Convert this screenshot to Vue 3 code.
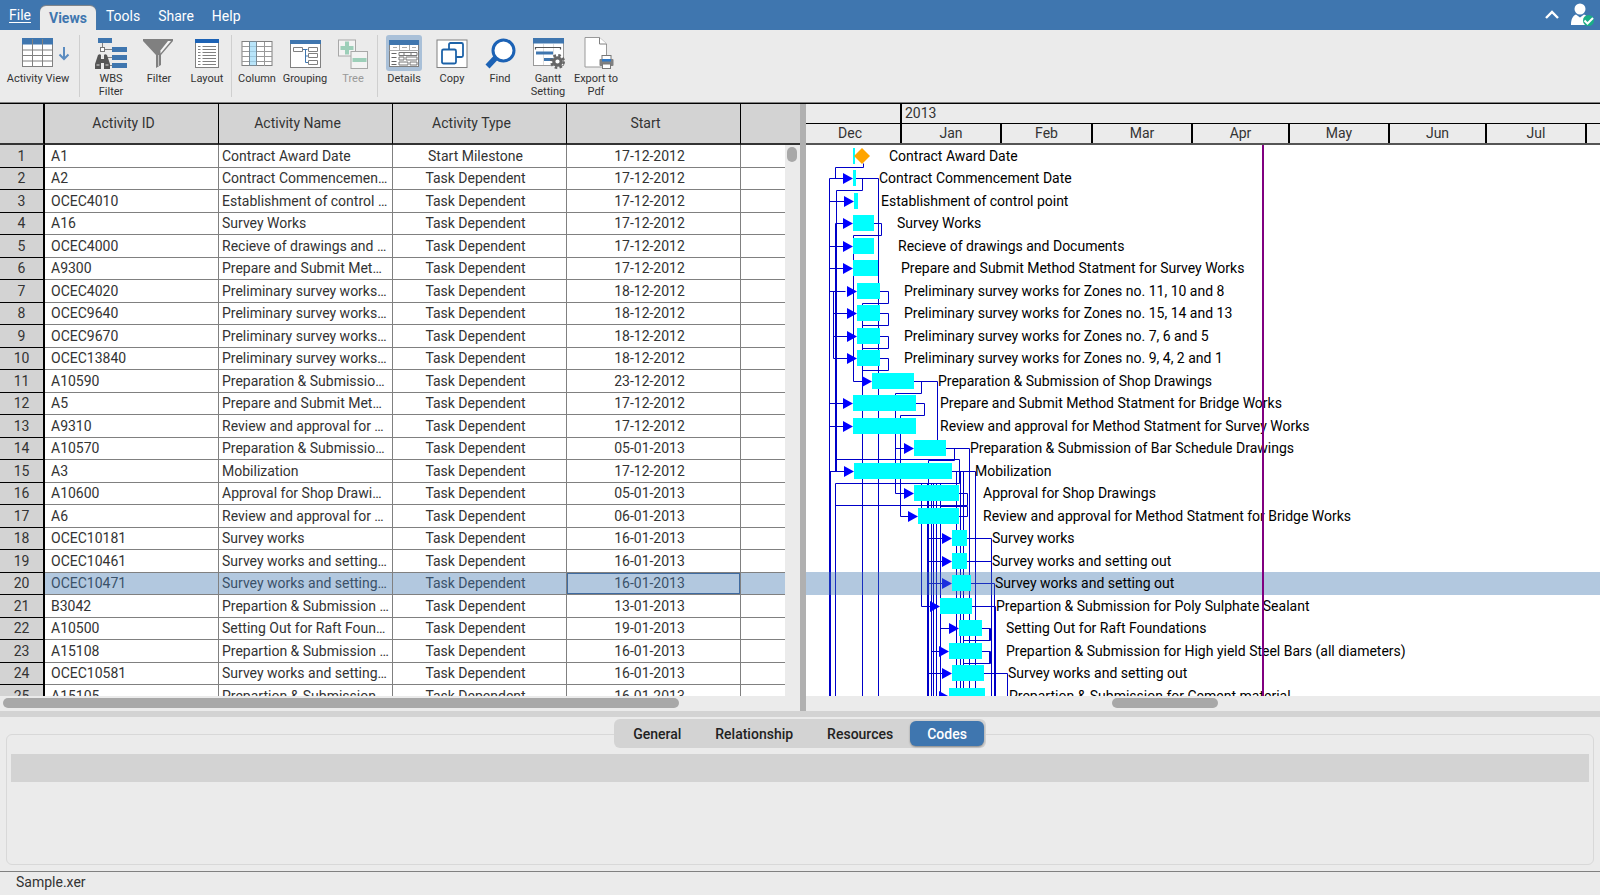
<script setup>
import { ref } from 'vue'

const menus = ['File', 'Views', 'Tools', 'Share', 'Help']
const activeMenu = ref('Views')

const toolGroups = [
  [{ icon: 'activity', label: 'Activity View' }],
  [
    { icon: 'wbs', label: 'WBS Filter' },
    { icon: 'filter', label: 'Filter' },
    { icon: 'layout', label: 'Layout' },
  ],
  [
    { icon: 'column', label: 'Column' },
    { icon: 'grouping', label: 'Grouping' },
    { icon: 'tree', label: 'Tree', disabled: true },
  ],
  [
    { icon: 'details', label: 'Details', pressed: true },
    { icon: 'copy', label: 'Copy' },
    { icon: 'find', label: 'Find' },
    { icon: 'gantt', label: 'Gantt Setting' },
    { icon: 'export', label: 'Export to Pdf' },
  ],
]

const columns = ['Activity ID', 'Activity Name', 'Activity Type', 'Start']

// id, name, type, start date, bar start, bar end, label start
const T = 'Task Dependent'
const activities = [
  ['A1', 'Contract Award Date', 'Start Milestone', '17-12-2012', 47, 49, 83],
  ['A2', 'Contract Commencement Date', T, '17-12-2012', 47, 50, 73],
  ['OCEC4010', 'Establishment of control point', T, '17-12-2012', 48, 52, 75],
  ['A16', 'Survey Works', T, '17-12-2012', 47, 68, 91],
  ['OCEC4000', 'Recieve of drawings and Documents', T, '17-12-2012', 47, 68, 92],
  ['A9300', 'Prepare and Submit Method Statment for Survey Works', T, '17-12-2012', 47, 72, 95],
  ['OCEC4020', 'Preliminary survey works for Zones no. 11, 10 and 8', T, '18-12-2012', 51, 74, 98],
  ['OCEC9640', 'Preliminary survey works for Zones no. 15, 14 and 13', T, '18-12-2012', 51, 74, 98],
  ['OCEC9670', 'Preliminary survey works for Zones no. 7, 6 and 5', T, '18-12-2012', 51, 74, 98],
  ['OCEC13840', 'Preliminary survey works for Zones no. 9, 4, 2 and 1', T, '18-12-2012', 51, 74, 98],
  ['A10590', 'Preparation & Submission of Shop Drawings', T, '23-12-2012', 66, 108, 132],
  ['A5', 'Prepare and Submit Method Statment for Bridge Works', T, '17-12-2012', 47, 110, 134],
  ['A9310', 'Review and approval for Method Statment for Survey Works', T, '17-12-2012', 47, 110, 134],
  ['A10570', 'Preparation & Submission of Bar Schedule Drawings', T, '05-01-2013', 108, 140, 164],
  ['A3', 'Mobilization', T, '17-12-2012', 48, 146, 169],
  ['A10600', 'Approval for Shop Drawings', T, '05-01-2013', 108, 153, 177],
  ['A6', 'Review and approval for Method Statment for Bridge Works', T, '06-01-2013', 112, 153, 177],
  ['OCEC10181', 'Survey works', T, '16-01-2013', 146, 161, 186],
  ['OCEC10461', 'Survey works and setting out', T, '16-01-2013', 146, 161, 186],
  ['OCEC10471', 'Survey works and setting out', T, '16-01-2013', 146, 165, 189],
  ['B3042', 'Prepartion & Submission for Poly Sulphate Sealant', T, '13-01-2013', 134, 166, 190],
  ['A10500', 'Setting Out for Raft Foundations', T, '19-01-2013', 153, 176, 200],
  ['A15108', 'Prepartion & Submission for High yield Steel Bars (all diameters)', T, '16-01-2013', 143, 176, 200],
  ['OCEC10581', 'Survey works and setting out', T, '16-01-2013', 146, 178, 202],
  ['A15105', 'Prepartion & Submission for Cement material', T, '16-01-2013', 143, 179, 203],
].map(([id, name, type, start, x1, x2, tx]) => ({ id, name, type, start, x1, x2, tx }))

const selected = ref(19)

const months = [
  ['Dec', 96], ['Jan', 100], ['Feb', 91], ['Mar', 100], ['Apr', 97],
  ['May', 100], ['Jun', 97], ['Jul', 100], ['', 100],
].map(([name, width]) => ({ name, width }))

// centre line of a one-based row; rows alternate 23 and 22 pixels
const mid = (n) => Math.floor((45 * n - 23) / 2)
const floor = 700

const links = [
  `M58 18V22H30V${mid(2)}`,
  `M24 ${floor}V${mid(2)}H40`,
  `M50 ${mid(2)}H73V${floor}`,
  `M57 ${mid(2)}V45H31V314H154V338H30V${floor}`,
  `M30 ${mid(15)}V${mid(4)}H40`, `M31 ${mid(4)}V${mid(15)}`,
  ...[3, 5, 6, 7, 12, 13, 15].map((n) => `M24 ${mid(n)}H40`),
  `M28 ${mid(7)}V${mid(10)}H42`, `M28 ${mid(8)}H42`, `M28 ${mid(9)}H42`,
  `M68 ${mid(4)}H76V90H48V${mid(11)}H60`,
  ...[7, 8, 9, 10].map((n) => `M74 ${mid(n)}H83V${mid(n) + 12}H57`),
  `M57 158V${floor}`,
  `M108 ${mid(11)}H132V${mid(14)}`, `M131 338V${floor}`,
  `M116 ${mid(11)}V248H90V${mid(16)}H100`, `M90 ${mid(14)}H100`,
  `M110 ${mid(12)}H119V270H95V${mid(17)}H104`,
  `M140 ${mid(14)}H164V${floor}`, `M149 ${mid(14)}V315H123V${floor}`,
  `M146 ${mid(15)}H170V${floor}`, `M25 ${mid(15)}V${floor}`,
  ...[151, 155, 158].map((x) => `M${x} ${mid(15)}V${floor}`),
  ...[122, 126, 128, 135].map((x) => `M${x} 338V${floor}`),
  `M116 338V${mid(21)}H126`,
  `M153 ${mid(16)}H162V360H30`, `M153 ${mid(17)}H162V361H135`,
  `M161 ${mid(18)}H186V${floor}`, `M161 ${mid(19)}H186`, `M165 ${mid(20)}H189V${floor}`,
  `M166 ${mid(21)}H190V${floor}`,
  ...[18, 19, 20, 24].map((n) => `M122 ${mid(n)}H137`),
  `M135 ${mid(22)}H144`, `M126 ${mid(23)}H136`, `M126 ${mid(25)}H136`,
  ...[22, 23].map((n) => `M176 ${mid(n)}H185V${mid(n) + 12}H158M184 ${mid(n)}V${mid(n) + 12}`),
  `M178 ${mid(24)}H202V${floor}`,
]

const detailTabs = ['General', 'Relationship', 'Resources', 'Codes']
const activeTab = ref('Codes')
</script>

<template>
  <div class="app">
    <header class="menubar">
      <nav class="menus">
        <button
          v-for="m in menus"
          :key="m"
          type="button"
          class="menu"
          :class="{ active: m === activeMenu, file: m === 'File' }"
          @click="activeMenu = m"
        >{{ m }}</button>
      </nav>
      <div class="account">
        <button type="button" class="bare" aria-label="Collapse ribbon">
          <svg width="14" height="10" viewBox="0 0 14 10"><path d="M1 8 7 2l6 6" fill="none" stroke="#fff" stroke-width="2.4" /></svg>
        </button>
        <button type="button" class="bare" aria-label="Account">
          <svg width="24" height="24" viewBox="0 0 24 24">
            <circle cx="9" cy="6" r="5.5" fill="#fff" />
            <path d="M0 22c0-6 2-9.500 5-10.500l4 3 4-3c3 1 5 4.500 5 10.500z" fill="#fff" />
            <circle cx="17.500" cy="17.500" r="5.500" fill="#1aae87" />
            <path d="m13.500 17.500 3 3 5.500-5.500" fill="none" stroke="#fff" stroke-width="2" />
          </svg>
        </button>
      </div>
    </header>

    <div class="toolbar">
      <div v-for="(group, gi) in toolGroups" :key="gi" class="group" :class="'group-' + gi">
        <button
          v-for="t in group"
          :key="t.icon"
          type="button"
          class="tool"
          :class="{ pressed: t.pressed }"
          :disabled="t.disabled"
        >
          <svg v-if="t.icon === 'activity'" class="icon wide" viewBox="0 0 66 36">
            <rect x="17.500" y="3.500" width="30" height="28" fill="#fff" stroke="#808080" />
            <rect x="17" y="3" width="31" height="6.500" fill="#3f76af" />
            <path d="M17.500 15h30M17.500 20.500h30M17.500 26h30M27.500 4v28M37.500 4v28" stroke="#808080" />
            <path d="M59 12v12M54.500 19.500 59 24l4.500-4.500" fill="none" stroke="#5b8cc0" stroke-width="2" />
          </svg>
          <svg v-else class="icon" viewBox="0 0 36 36">
            <g v-if="t.icon === 'wbs'">
              <path d="M9.500 8v5M12 14.500h7M13 22.500h6M15 30.500h4" stroke="#808080" fill="none" />
              <path d="M5 3h14v5H5zM19 12h15v5H19zM19 20h15v5H19zM19 28h15v5H19z" fill="#3f76af" />
              <rect x="7.500" y="12.500" width="4" height="4" fill="#fff" stroke="#777" />
              <path d="M5 20q2-1.500 3 0v4h3v-4q1-1.500 3 0l3 9v5h-6v-6H8v6H2v-5z" fill="#555" />
              <path d="M3.500 30h3M12.500 30h3M9.500 21v2" stroke="#ddd" />
            </g>
            <g v-else-if="t.icon === 'filter'">
              <path d="M2 4h30v2L20 20v10l-5 3V20L2 6z" fill="#808080" />
              <path d="M27 6h3L19.500 18.500v-3z" fill="#f4f4f4" />
              <path d="M17.500 20v11" stroke="#c4c4c4" />
            </g>
            <g v-else-if="t.icon === 'layout'">
              <rect x="6.500" y="4.500" width="23" height="28" fill="#fff" stroke="#808080" />
              <rect x="6" y="4" width="24" height="4" fill="#1c62b5" />
              <path d="M9 11.500h2.500M9 14.500h2.500M9 17.500h2.500M9 20.500h2.500M9 23.500h2.500M9 26.500h2.500M9 29.500h2.500M13.500 11.500H27M13.500 14.500H27M13.500 17.500H27M13.500 20.500H27M13.500 23.500H27M13.500 26.500H27M13.500 29.500H27" stroke="#808080" />
            </g>
            <g v-else-if="t.icon === 'column'">
              <rect x="3" y="6.500" width="30" height="24" fill="#fff" stroke="#808080" />
              <path d="M3 11.500h30M3 16.500h30M3 21.500h30M3 26.500h30M25.500 7v24" stroke="#999" />
              <rect x="10.500" y="6.500" width="7" height="24" fill="#b9e5fa" stroke="#7a8a94" />
              <path d="M11 11.500h6M11 16.500h6M11 21.500h6M11 26.500h6" stroke="#9cc8de" />
            </g>
            <g v-else-if="t.icon === 'grouping'">
              <rect x="3.500" y="5.500" width="30" height="27" fill="#fff" stroke="#808080" />
              <rect x="3" y="5" width="31" height="4" fill="#3f76af" />
              <path d="M15.500 14.500h5M18.500 14.500v13M18.500 21h2.500M18.500 27.500h2.500" stroke="#3f76af" fill="none" />
              <path d="M6.500 12.500h9v4h-9zM21.500 12.500h9v4h-9zM21.500 18.500h9v4h-9zM21.500 25.500h9v4h-9z" fill="#fff" stroke="#808080" />
            </g>
            <g v-else-if="t.icon === 'tree'">
              <rect x="3.500" y="5" width="17" height="16" fill="#f3f3f3" stroke="#a8a8a8" />
              <path d="M12 6.500v13M5.500 13h13" stroke="#9dcfb9" stroke-width="4" />
              <rect x="16" y="16.500" width="16.500" height="17" fill="#f3f3f3" stroke="#a8a8a8" />
              <path d="M17.500 25h14" stroke="#9dcfb9" stroke-width="4" />
            </g>
            <g v-else-if="t.icon === 'details'">
              <rect x="3.500" y="5.500" width="29" height="26" fill="#fff" stroke="#808080" />
              <rect x="3" y="5" width="30" height="5" fill="#3f76af" />
              <path d="M3.500 15.500h29M13.500 10v5M23.500 10v5M7 12.500h4M16 12.500h5M26 12.500h4" stroke="#aaa" />
              <path d="M5.500 18.500h5M5.500 22.500h5M5.500 26.500h5M5.500 29.500h5" stroke="#666" />
              <path d="M13 17.500h18v3H13zM13 22h5v3h-5zM20 22h11v3H20zM13 27h9v3h-9zM24 27h7v3h-7zM18 17.500v3M25 17.500v3" fill="none" stroke="#777" />
            </g>
            <g v-else-if="t.icon === 'copy'">
              <rect x="3" y="5" width="30" height="27.500" fill="#fff" stroke="#808080" />
              <rect x="15" y="8" width="14" height="14" rx="1.500" fill="#fff" stroke="#1c62a8" stroke-width="1.800" />
              <rect x="8" y="14.500" width="14" height="14" rx="1.500" fill="#fff" stroke="#1c62a8" stroke-width="1.800" />
            </g>
            <g v-else-if="t.icon === 'find'">
              <path d="m14 22.500-8.500 9" stroke="#1c62b5" stroke-width="5.500" />
              <circle cx="21.500" cy="15.500" r="10.500" fill="#fff" stroke="#1c62b5" stroke-width="3" />
            </g>
            <g v-else-if="t.icon === 'gantt'">
              <rect x="3.500" y="3.500" width="30" height="27" fill="#fff" stroke="#999" />
              <rect x="3" y="3" width="31" height="5.500" fill="#3f76af" />
              <path d="M13.500 9v21M23.500 9v21" stroke="#ddd" />
              <path d="M5.500 14.500v-2h25v2" fill="none" stroke="#555" stroke-width="1.200" />
              <path d="M6 18h17M14 24.500h9" stroke="#3f76af" stroke-width="3" />
              <circle cx="27.500" cy="26.500" r="6.200" fill="none" stroke="#666" stroke-width="2.600" stroke-dasharray="2.600 2.270" />
              <circle cx="27.500" cy="26.500" r="3.700" fill="#fff" stroke="#666" stroke-width="3.200" />
            </g>
            <g v-else>
              <path d="M7 2.500h14.500L28.500 9v23H7z" fill="#fff" stroke="#999" />
              <path d="M21.500 2.500V9h7" fill="#fff" stroke="#808080" />
              <rect x="24" y="20.500" width="9" height="5" fill="#fff" stroke="#777" />
              <rect x="21.500" y="24" width="14" height="7" rx="1" fill="#808080" />
              <rect x="24" y="24" width="9" height="2.500" fill="#2f78c5" />
              <rect x="24.500" y="29" width="8" height="4.500" fill="#fff" stroke="#777" />
            </g>
          </svg>
          <span class="tool-label">{{ t.label }}</span>
        </button>
      </div>
    </div>

    <main class="workspace">
      <section class="grid-pane">
        <div class="grid-clip">
          <div class="head-fill"></div>
          <table>
            <colgroup>
              <col class="c-num"><col class="c-data"><col class="c-data"><col class="c-data"><col class="c-data"><col>
            </colgroup>
            <thead>
              <tr><th></th><th v-for="c in columns" :key="c">{{ c }}</th><th></th></tr>
            </thead>
            <tbody>
              <tr v-for="(a, i) in activities" :key="i" :class="{ selected: i === selected }" @click="selected = i">
                <th scope="row">{{ i + 1 }}</th>
                <td class="id">{{ a.id }}</td>
                <td class="name">{{ a.name }}</td>
                <td class="mid">{{ a.type }}</td>
                <td class="mid start">{{ a.start }}</td>
                <td></td>
              </tr>
            </tbody>
          </table>
          <div class="v-track"><div class="v-thumb"></div></div>
        </div>
        <div class="h-track"><div class="h-thumb grid-thumb"></div></div>
      </section>

      <div class="splitter"></div>

      <section class="gantt-pane">
        <div class="years"><span class="year blank"></span><span class="year">2013</span></div>
        <div class="months">
          <span v-for="m in months" :key="m.name" class="month" :style="{ width: m.width + 'px' }">{{ m.name }}</span>
        </div>
        <div class="chart">
          <svg class="canvas" width="100%" height="100%">
            <g transform="translate(-.5 .5)" fill="none" stroke="#0000c8">
              <path v-for="(d, i) in links" :key="i" :d="d" />
            </g>
            <g fill="#0000ff">
              <template v-for="(a, i) in activities" :key="i">
                <path v-if="i > 0" :d="`M${a.x1 - 10} ${mid(i + 1) - 5}v11l10-5.500z`" />
              </template>
            </g>
            <rect x="0" :y="mid(selected + 1) - 11" width="100%" height="23" fill="#3f76af" fill-opacity="0.4" />
            <g fill="#00ffff">
              <rect v-for="(a, i) in activities" :key="i" :x="a.x1" :y="mid(i + 1) - 8" :width="a.x2 - a.x1" height="16" />
            </g>
            <path d="M48 11l8-8 8 8-8 8z" fill="#ffa500" />
            <g class="labels">
              <text v-for="(a, i) in activities" :key="i" :x="a.tx" :y="mid(i + 1) + 5">{{ a.name }}</text>
            </g>
            <rect x="456" y="0" width="2" height="100%" fill="#800080" />
          </svg>
        </div>
        <div class="h-track"><div class="h-thumb gantt-thumb"></div></div>
      </section>
    </main>

    <section class="details">
      <div class="tabs" role="tablist">
        <button
          v-for="t in detailTabs"
          :key="t"
          type="button"
          role="tab"
          class="tab"
          :class="{ on: t === activeTab }"
          :aria-selected="t === activeTab"
          @click="activeTab = t"
        >{{ t }}</button>
      </div>
      <div class="panel"><div class="panel-head"></div></div>
    </section>

    <footer class="status">Sample.xer</footer>
  </div>
</template>

<style>
html, body { height: 100%; margin: 0; }
#app { height: 100%; }
</style>

<style scoped>
* { box-sizing: border-box; }
.app {
  height: 100vh;
  display: flex;
  flex-direction: column;
  background: #ebebeb;
  color: #333;
  font-family: Roboto, "Liberation Sans", sans-serif;
  font-size: 14px;
  overflow: hidden;
}
button { font: inherit; color: inherit; border: 0; padding: 0; background: none; }
.menubar {
  height: 30px;
  flex: none;
  display: flex;
  justify-content: space-between;
  background: #3f76af;
  color: #fff;
}
.menus { display: flex; align-items: flex-end; }
.menu { height: 28px; padding: 0 9px; line-height: 28px; }
.menu.file { height: 30px; text-decoration: underline; text-underline-offset: 2px; }
.menu.active {
  height: 24px;
  line-height: 24px;
  font-weight: 700;
  color: #3f76af;
  background: #ebebeb;
  border-radius: 6px 6px 0 0;
  margin-right: 1px;
  box-shadow: 0 -1px 1px #888;
}
.account { display: flex; align-items: center; gap: 12px; padding-right: 5px; }
.bare { display: flex; }
.toolbar {
  height: 73px;
  flex: none;
  display: flex;
  align-items: flex-start;
  padding-top: 5px;
  border-bottom: 1px solid #808080;
}
.group { display: flex; height: 62px; border-right: 1px solid #cfcfcf; margin-right: 1px; }
.group-0 { width: 80px; margin-right: 7px; }
.group-2 { margin-right: 2px; }
.group-3 { border-right: 0; }
.tool { width: 48px; display: flex; flex-direction: column; align-items: center; color: #333; }
.group-0 .tool { width: 76px; }
.icon { width: 36px; height: 36px; flex: none; border-radius: 3px; }
.icon.wide { width: 66px; }
.pressed .icon { background: #a9c0d8; }
.tool:disabled { color: #999; }
.tool-label { font-size: 11px; line-height: 13px; margin-top: 1px; }
.workspace { flex: 1; min-height: 0; display: flex; border-top: 1px solid #000; }
.grid-pane { width: 50%; display: flex; flex-direction: column; min-width: 0; }
.grid-clip { flex: 1; min-height: 0; position: relative; overflow: hidden; background: #ebebeb; padding-right: 15px; }
.head-fill { position: absolute; top: 0; right: 0; width: 15px; height: 41px; background: #d3d3d3; border-bottom: 2px solid #333; }
table { width: 100%; table-layout: fixed; border-collapse: separate; border-spacing: 0; background: #fff; }
.c-num { width: 45px; }
.c-data { width: 174px; }
thead th {
  height: 41px;
  padding: 0 16px 2px 0;
  background: #d3d3d3;
  border-right: 1px solid #000;
  border-bottom: 2px solid #333;
  font-weight: 400;
}
thead th:first-child { border-right-width: 2px; }
thead th:last-child { border-right: 0; }
tbody tr { height: 23px; line-height: 21px; }
tbody tr:nth-child(even) { height: 22px; }
tbody th {
  padding: 0;
  background: #d3d3d3;
  border-right: 2px solid #000;
  border-bottom: 1px solid #000;
  font-weight: 400;
}
td {
  padding: 0;
  border-right: 1px solid #808080;
  border-bottom: 1px solid #808080;
  white-space: nowrap;
  overflow: hidden;
  text-overflow: ellipsis;
}
td:last-child { border-right: 0; }
.id { padding-left: 6px; }
.name { padding-left: 3px; padding-right: 3px; }
.mid { text-align: center; padding-right: 8px; }
.selected td { background: #b2c8df; color: #3a5169; }
.selected .start { box-shadow: inset 0 0 0 1px #3f6ba0; }
.v-track { position: absolute; top: 41px; right: 0; bottom: 0; width: 15px; background: #ebebeb; }
.v-thumb { width: 10px; height: 15px; margin: 2px 0 0 2px; border-radius: 5px; background: #a8a8a8; }
.h-track { height: 15px; flex: none; padding-top: 2px; background: #ebebeb; }
.h-thumb { height: 10px; border-radius: 5px; background: #a8a8a8; }
.grid-thumb { width: 676px; margin-left: 3px; }
.gantt-thumb { width: 106px; margin-left: 306px; }
.splitter { width: 6px; flex: none; background: #b0b0b0; }
.gantt-pane { flex: 1; min-width: 0; display: flex; flex-direction: column; }
.years { height: 20px; flex: none; display: flex; border-bottom: 1px solid #000; line-height: 19px; }
.year { padding-left: 3px; }
.year.blank { width: 96px; border-right: 2px solid #000; padding: 0; }
.months { height: 21px; flex: none; display: flex; line-height: 19px; border-bottom: 2px solid #555; overflow: hidden; }
.month { flex: none; text-align: center; border-right: 2px solid #000; }
.month:first-child { padding-right: 6px; }
.chart { flex: 1; min-height: 0; position: relative; overflow: hidden; background: #fff; }
.canvas { position: absolute; inset: 0; display: block; }
.labels { fill: #000; }
.details { height: 160px; flex: none; border-top: 6px solid #d3d3d3; display: flex; flex-direction: column; padding: 2px 6px 6px; }
.tabs {
  align-self: center;
  display: flex;
  height: 29px;
  flex: none;
  padding: 2px;
  border-radius: 6px;
  background: #d3d3d3;
  z-index: 1;
}
.tab { padding: 0 17px; font-weight: 500; border-radius: 6px; color: #222; }
.tab.on { background: #3f76af; color: #fff; box-shadow: 0 1px 2px #888; }
.panel { flex: 1; margin-top: -14px; padding: 19px 4px 0; border: 1px solid #d8d8d8; border-radius: 6px; }
.panel-head { height: 28px; background: #d3d3d3; }
.status { height: 24px; flex: none; border-top: 1px solid #808080; padding-left: 16px; line-height: 20px; }
</style>
